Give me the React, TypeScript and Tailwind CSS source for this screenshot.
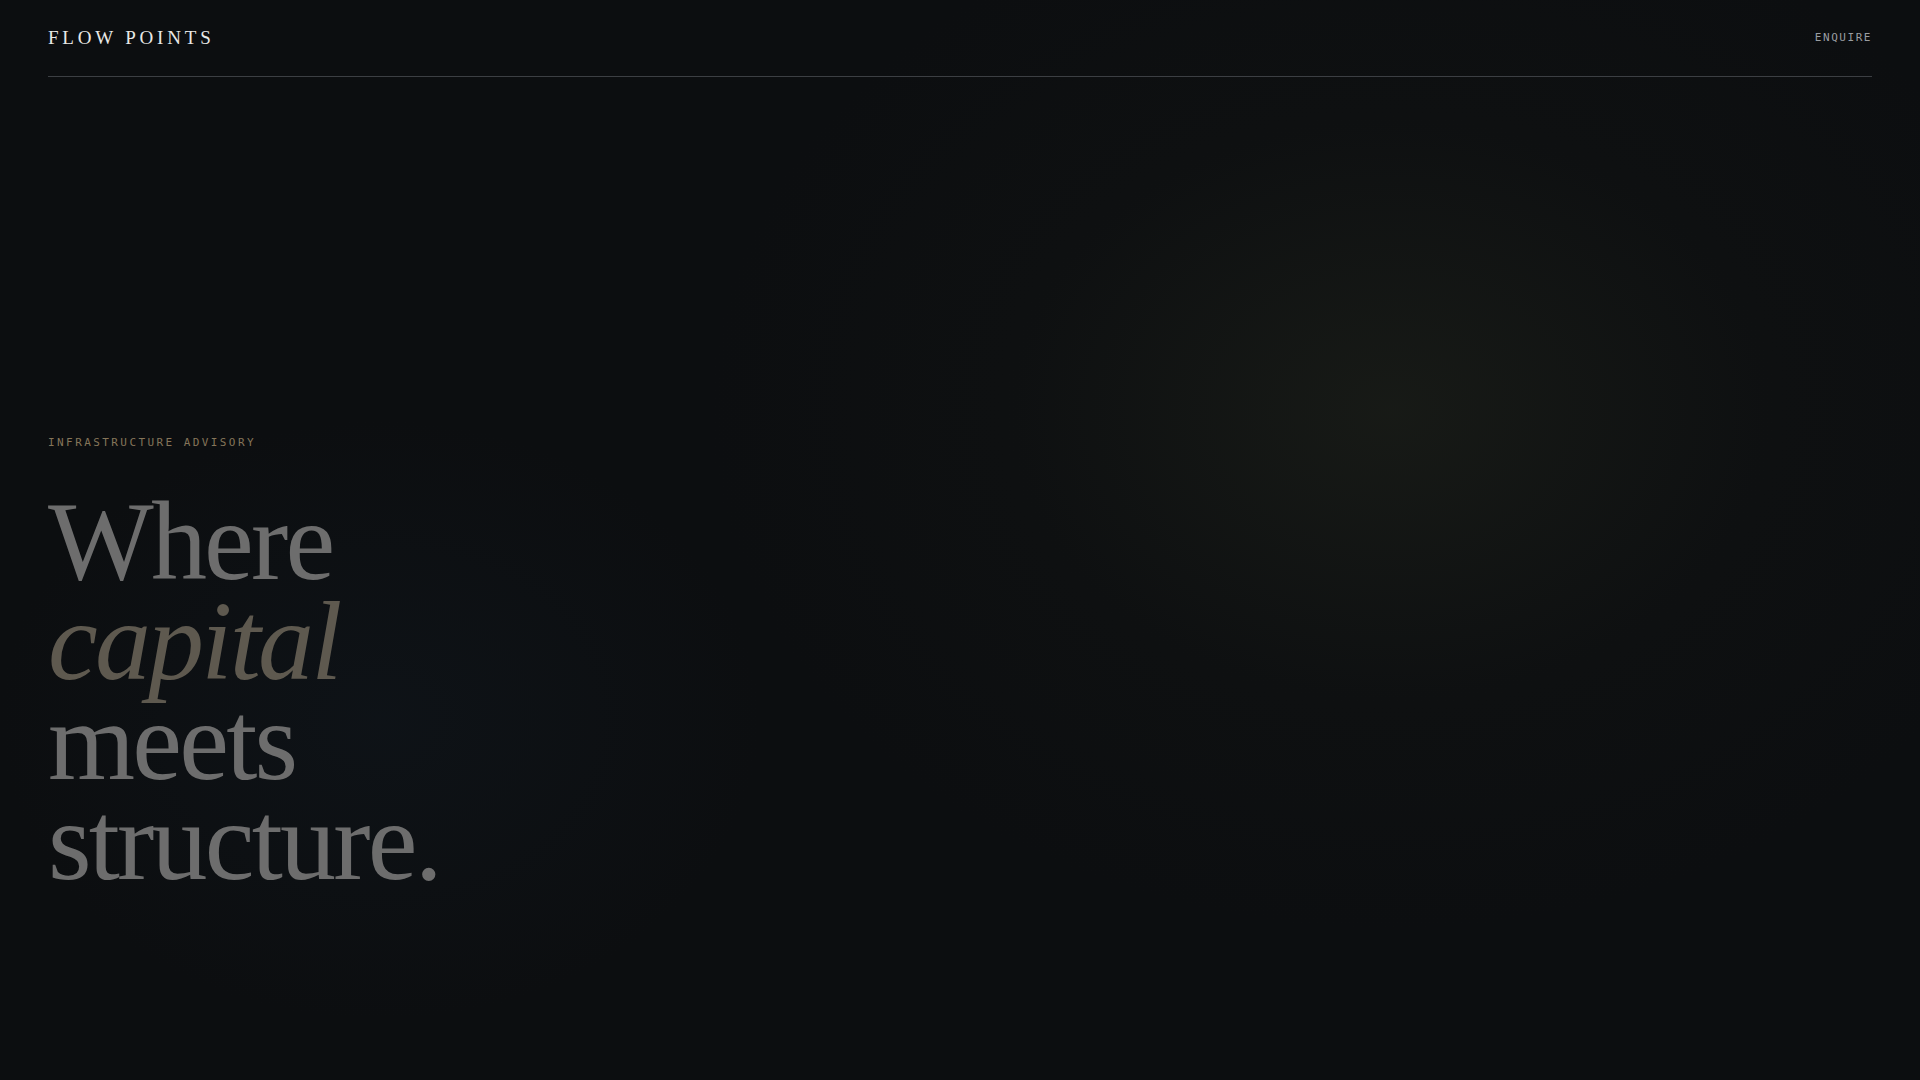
export default function App() {
  return (
    <main className="relative min-h-screen overflow-hidden bg-[#0c0e10] text-white">
      {/* ambient glows */}
      <div
        className="pointer-events-none absolute inset-0 bg-[radial-gradient(ellipse_680px_520px_at_1390px_410px,rgba(28,31,25,0.7),rgba(18,20,19,0.35)_55%,transparent_100%)]"
        aria-hidden
      />
      <div
        className="pointer-events-none absolute inset-0 bg-[radial-gradient(ellipse_380px_300px_at_380px_720px,rgba(16,23,30,0.5),transparent_100%)]"
        aria-hidden
      />

      <div className="relative flex min-h-screen flex-col">
        <header className="mx-12 flex h-[77px] items-center justify-between border-b border-[#3c3f43] pt-px">
          <span className="font-['Liberation_Serif',serif] text-[19px] tracking-[0.2em] text-[#e8e8e6]">
            FLOW POINTS
          </span>
          <a
            href="#"
            className="font-['DejaVu_Sans_Mono',monospace] text-[11px] tracking-[0.14em] text-[#9a9da1]"
          >
            ENQUIRE
          </a>
        </header>

        <section className="px-12 pt-[358px]">
          <p className="font-['DejaVu_Sans_Mono',monospace] text-[11px] leading-4 tracking-[0.22em] text-[#857559]">
            INFRASTRUCTURE ADVISORY
          </p>
          <h1 className="mt-10 font-['Liberation_Serif',serif] text-[112px] leading-[100px] tracking-[-0.025em] text-[#6d6d6d]">
            <span className="block">Where</span>
            <span className="block italic text-[#5e594f]">capital</span>
            <span className="block">meets</span>
            <span className="block">structure.</span>
          </h1>
        </section>
      </div>
    </main>
  );
}
